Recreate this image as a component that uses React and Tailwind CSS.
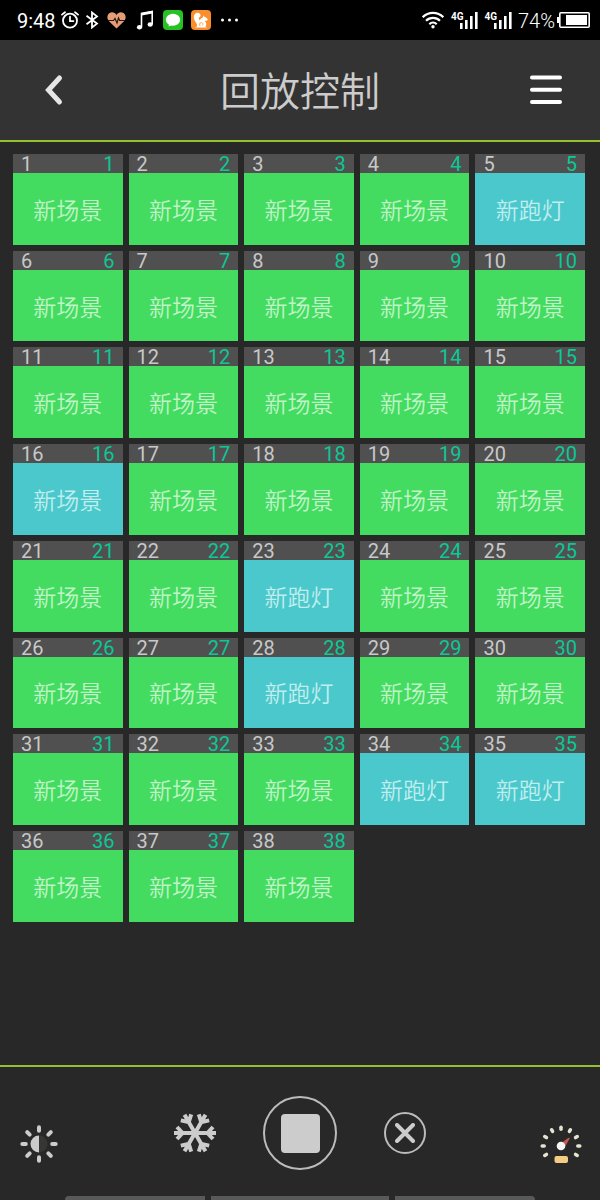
import React from "react";

const CHASE_IDS = [5, 23, 28, 34, 35];
const CYAN_IDS = [...CHASE_IDS, 16];

const SCENES = Array.from({ length: 38 }, (_, i) => {
  const id = i + 1;
  return {
    id,
    name: CHASE_IDS.includes(id) ? "新跑灯" : "新场景",
    cyan: CYAN_IDS.includes(id),
  };
});

const Signal = () => (
  <span className="flex items-start">
    <span className="text-[10px] leading-[10px] font-bold">4G</span>
    <svg className="-ml-1 w-[19px] h-[17px]" viewBox="0 0 19 17" fill="currentColor">
      <rect x="1" y="11" width="2.6" height="6" />
      <rect x="6" y="8" width="2.6" height="9" />
      <rect x="11" y="4" width="2.6" height="13" />
      <rect x="16" y="0" width="2.6" height="17" />
    </svg>
  </span>
);

const StatusBar = () => (
  <div className="h-10 bg-black text-white flex items-center justify-between pl-[17px] pr-2.5">
    <div className="flex items-center">
      <span className="w-11 pt-0.5 text-[20px] leading-6">9:48</span>

      {/* Alarm */}
      <svg className="w-[18px] h-[18px]" viewBox="0 0 18 18" fill="none" stroke="currentColor" strokeWidth="1.8" strokeLinecap="round">
        <circle cx="9" cy="9.7" r="7" />
        <path d="M9 5.7v4.4h3.4M1 3.6L4 1.2M17 3.6L14 1.2" />
      </svg>

      {/* Bluetooth */}
      <svg className="ml-1.5 w-[14px] h-[18px]" viewBox="0 0 14 18" fill="none" stroke="currentColor" strokeWidth="1.8">
        <path d="M1.5 4.8L12 12.6 7 16.5V1.5l5 3.9L1.5 13.2" />
      </svg>

      {/* Health */}
      <svg className="ml-2 w-[19px] h-[17px]" viewBox="0 0 19 17">
        <path d="M9.5 16.5L2 9.2C-.4 6.6 0 3 2.2 1.3 4.6-.5 7.9.1 9.5 3c1.6-2.9 4.9-3.5 7.3-1.7C19 3 19.4 6.6 17 9.2z" fill="#e59c78" />
        <path d="M1 8.5h5.5l1.5-2 2 4.5 1.5-5 1.2 2.5H18" fill="none" stroke="#2a1a12" strokeWidth="1.2" />
      </svg>

      {/* Music */}
      <svg className="ml-2.5 w-[18px] h-[20px]" viewBox="0 0 18 20" fill="none" stroke="currentColor" strokeWidth="1.6">
        <path d="M5.5 17V3.5L16.2 1.5V14" />
        <path d="M5.5 4.2L16.2 2.2" strokeWidth="2.4" />
        <ellipse cx="3.5" cy="17.2" rx="2.6" ry="2.2" fill="currentColor" stroke="none" />
        <ellipse cx="14.2" cy="14.5" rx="2.6" ry="2.2" fill="currentColor" stroke="none" />
      </svg>

      {/* Messages */}
      <svg className="ml-[9px] w-[20px] h-[20px]" viewBox="0 0 20 20">
        <rect width="20" height="20" rx="4" fill="#27c224" />
        <ellipse cx="10" cy="9.7" rx="7.2" ry="6" fill="#fff" />
        <path d="M6 14l-.5 2.5 4-1.5z" fill="#fff" />
      </svg>

      {/* Squirrel browser */}
      <svg className="ml-2 w-[20px] h-[20px]" viewBox="0 0 20 20">
        <rect width="20" height="20" rx="4" fill="#f98f2c" />
        <path d="M4 17.5c1.500-.5 2.500-1.500 2-3C5.300 12.500 2.800 10.500 2.800 7c0-3 2.700-4.800 5-4C10 3.800 10.200 6.500 8.300 7.300c-1 .5-.5 2 .5 3 .8-1.600 1.900-2.600 3.200-3.100l.6-2 1 1.800c1.600.3 2.700 1.300 3.200 2.700-.7 1.200-2 1-3.200 1.200 2 1.200 2.300 4 .7 5.600l2 1z" fill="#fff" />
        <path d="M9.5 16.2c-1.500-1-1.200-3.400.7-3.600 1.800-.2 2.500 2 1 2.900" fill="none" stroke="#f98f2c" strokeWidth=".8" />
      </svg>

      <svg className="ml-2.5 w-[17px] h-[4px]" viewBox="0 0 17 4" fill="currentColor">
        <circle cx="1.5" cy="2" r="1.5" />
        <circle cx="8.5" cy="2" r="1.5" />
        <circle cx="15.5" cy="2" r="1.5" />
      </svg>
    </div>

    <div className="flex items-center">
      {/* Wi-Fi */}
      <svg className="mr-[7px] w-[22px] h-[18px]" viewBox="0 0 22 18" fill="none" stroke="currentColor" strokeWidth="2.2">
        <path d="M.7 6.2a14.5 14.5 0 0 1 20.6 0M4 9.8a10 10 0 0 1 14 0M7.3 13.2a5.3 5.3 0 0 1 7.4 0" />
        <circle cx="11" cy="15.8" r="1.7" fill="currentColor" stroke="none" />
      </svg>
      <div className="flex gap-1.5">
        <Signal />
        <Signal />
      </div>
      <span className="ml-1.5 pt-0.5 text-[20px] leading-6 font-light">74%</span>
      <svg className="ml-0.5 w-[33px] h-[16px]" viewBox="0 0 33 16">
        <rect x="2.8" y=".8" width="29.4" height="14.4" rx="1" fill="none" stroke="currentColor" strokeWidth="1.6" />
        <rect y="5" width="2" height="6" fill="currentColor" />
        <rect x="9" y="3" width="21" height="10" fill="currentColor" />
      </svg>
    </div>
  </div>
);

const Header = () => (
  <header className="h-[102px] px-8 bg-[#333333] border-b-2 border-[#94c22e] flex items-center justify-between">
    <button className="w-11 h-11 flex items-center justify-center text-[#e6e6e6]" aria-label="返回">
      <svg className="w-5 h-8" viewBox="0 0 20 32" fill="none" stroke="currentColor" strokeWidth="5" strokeLinecap="round">
        <path d="M15.5 4L4.500 16l11 12" />
      </svg>
    </button>
    <h1 className="pt-1.5 text-[40px] leading-[48px] font-[350] text-[#cccccc]">回放控制</h1>
    <button className="w-11 h-11 flex items-center justify-center text-white" aria-label="菜单">
      <svg className="w-[34px] h-8" viewBox="0 0 34 32" fill="none" stroke="currentColor" strokeWidth="4" strokeLinecap="round">
        <path d="M3 3.5h28M3 15.8h28M3 28h28" />
      </svg>
    </button>
  </header>
);

const SceneTile = ({ scene }) => (
  <button className="aspect-[29/24] flex flex-col">
    <span className="w-full h-[19px] pt-px px-2 bg-[#505050] flex items-center justify-between text-[20px] leading-5">
      <span className="text-[#c8c8c8]">{scene.id}</span>
      <span className="text-[#0cc896]">{scene.id}</span>
    </span>
    <span
      className={`w-full flex-1 pt-1.5 flex items-center justify-center text-[23px] leading-7 font-[350] ${
        scene.cyan ? "bg-[#4ac8cc] text-[#c0eeee]" : "bg-[#43dc60] text-[#c0f4c8]"
      }`}
    >
      {scene.name}
    </span>
  </button>
);

const Footer = () => (
  <footer className="border-t-2 border-[#94c22e] pt-[29px] text-[#cccccc]">
    <div className="pl-[19px] pr-[19px] flex items-center justify-between">
      <button className="self-end mb-1.5" aria-label="亮度">
        <svg className="w-10 h-10" viewBox="-20 -20 40 40">
          <circle r="8.5" fill="#363632" />
          <path d="M0-8.5a8.5 8.5 0 0 0 0 17z" fill="currentColor" />
          {[0, 45, 90, 135, 180, 225, 270, 315].map((a) => (
            <path key={a} d="M0-13.2v-3.5" stroke="currentColor" strokeWidth="4" strokeLinecap="round" transform={`rotate(${a})`} />
          ))}
        </svg>
      </button>

      <div className="flex items-center gap-[47px]">
        <button aria-label="冻结">
          <svg className="w-[42px] h-[42px]" viewBox="-21 -21 42 42" fill="none" stroke="currentColor" strokeWidth="4">
            {[0, 60, 120, 180, 240, 300].map((a) => (
              <path key={a} d="M0 0h21M18 -6l-5.5 6 5.5 6" transform={`rotate(${a})`} />
            ))}
          </svg>
        </button>
        <button className="w-[74px] h-[74px] rounded-full border-2 border-[#bbbbbb] flex items-center justify-center" aria-label="停止">
          <span className="w-[39px] h-[39px] rounded bg-[#cccccc]" />
        </button>
        <button className="w-[42px] h-[42px] rounded-full border-2 border-[#bbbbbb] flex items-center justify-center" aria-label="关闭">
          <svg className="w-5 h-5" viewBox="0 0 20 20" stroke="currentColor" strokeWidth="4" strokeLinecap="round">
            <path d="M2 2l16 16M18 2L2 18" />
          </svg>
        </button>
      </div>

      <button className="self-end mb-1.5" aria-label="速度">
        <svg className="w-10 h-10 overflow-visible" viewBox="-20 -22 40 40">
          {[-120, -90, -60, -30, 0, 30, 60, 90, 120].map((a) => (
            <path key={a} d="M0-16.8v-2" stroke="#e4e4d0" strokeWidth="3.5" strokeLinecap="round" transform={`rotate(${a})`} />
          ))}
          <path d="M1-3.5L7.5-8.2q1.5-.3 1 1L4.5 0z" fill="#c95650" />
          <circle r="4.3" fill="#f5f5f5" />
          <rect x="-6.5" y="10" width="13.5" height="7" rx="2" fill="#f5cc84" />
        </svg>
      </button>
    </div>

    {/* Drawer handles */}
    <div className="mt-[26px] px-[65px] flex gap-1.5">
      <span className="flex-[140] h-1 rounded-tl-sm bg-[#585a59]" />
      <span className="flex-[177] h-1 bg-[#585a59]" />
      <span className="flex-[140] h-1 rounded-tr-sm bg-[#585a59]" />
    </div>
  </footer>
);

export default function App() {
  return (
    <div className="min-h-screen flex flex-col bg-[#282828] font-[Roboto,'Noto_Sans_CJK_SC',sans-serif]">
      <StatusBar />
      <Header />
      <main className="flex-1 pt-3 pb-6 pl-[13px] pr-[15px]">
        <div className="grid grid-cols-5 gap-1.5">
          {SCENES.map((scene) => (
            <SceneTile key={scene.id} scene={scene} />
          ))}
        </div>
      </main>
      <Footer />
    </div>
  );
}
